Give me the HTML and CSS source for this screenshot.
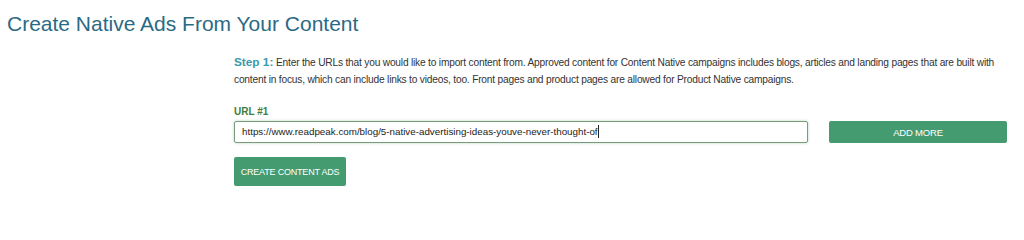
FILE: index.html
```html
<!DOCTYPE html>
<html>
<head>
<meta charset="utf-8">
<link rel="stylesheet" href="styles.css">
</head>
<body>
<h1 class="title">Create Native Ads From Your Content</h1>
<div class="content">
  <p class="step"><span class="step-label">Step 1:</span> Enter the URLs that you would like to import content from. Approved content for Content Native campaigns includes blogs, articles and landing pages that are built with content in focus, which can include links to videos, too. Front pages and product pages are allowed for Product Native campaigns.</p>
  <label class="url-label">URL #1</label>
  <div class="url-row">
    <div class="url-input">https://www.readpeak.com/blog/5-native-advertising-ideas-youve-never-thought-of<span class="caret"></span></div>
    <button class="btn btn-add">ADD MORE</button>
  </div>
  <button class="btn btn-create">CREATE CONTENT ADS</button>
</div>
</body>
</html>
```
FILE: styles.css
```css
html, body {
  margin: 0;
  padding: 0;
  background: #ffffff;
  font-family: "Liberation Sans", Arial, sans-serif;
}
.title {
  margin: 0;
  padding: 12px 0 0 7px;
  font-size: 21px;
  font-weight: normal;
  color: #2b6a85;
  line-height: 24px;
}
.content {
  margin: 18px 0 0 234px;
  width: 773px;
}
.step {
  margin: 0;
  font-size: 10.2px;
  letter-spacing: -0.2px;
  line-height: 17px;
  color: #333333;
}
.step-label {
  font-weight: bold;
  font-size: 11.8px;
  letter-spacing: 0;
  line-height: 14px;
  color: #3a9aa8;
}
.url-label {
  display: block;
  margin-top: 18px;
  font-size: 10px;
  font-weight: bold;
  color: #3d7d40;
  line-height: 12px;
}
.url-row {
  display: flex;
  gap: 21px;
  margin-top: 3px;
}
.url-input {
  box-sizing: border-box;
  width: 574px;
  height: 22px;
  border: 1px solid #7d9a80;
  border-radius: 2px;
  box-shadow: 0 0 3px rgba(80, 160, 90, 0.45);
  padding: 0 7px;
  font-size: 9.8px;
  line-height: 20px;
  color: #222222;
  white-space: nowrap;
  overflow: hidden;
}
.caret {
  display: inline-block;
  width: 1px;
  height: 13px;
  background: #222;
  vertical-align: -3px;
}
.btn {
  box-sizing: border-box;
  border: none;
  border-radius: 2px;
  background: #449b6f;
  color: #ffffff;
  font-family: "Liberation Sans", Arial, sans-serif;
  font-size: 9px;
  letter-spacing: -0.2px;
  cursor: pointer;
  padding: 0;
}
.btn-add {
  width: 178px;
  height: 22px;
  font-size: 9.5px;
}
.btn-create {
  display: block;
  margin-top: 14px;
  width: 112px;
  height: 29px;
}
```
